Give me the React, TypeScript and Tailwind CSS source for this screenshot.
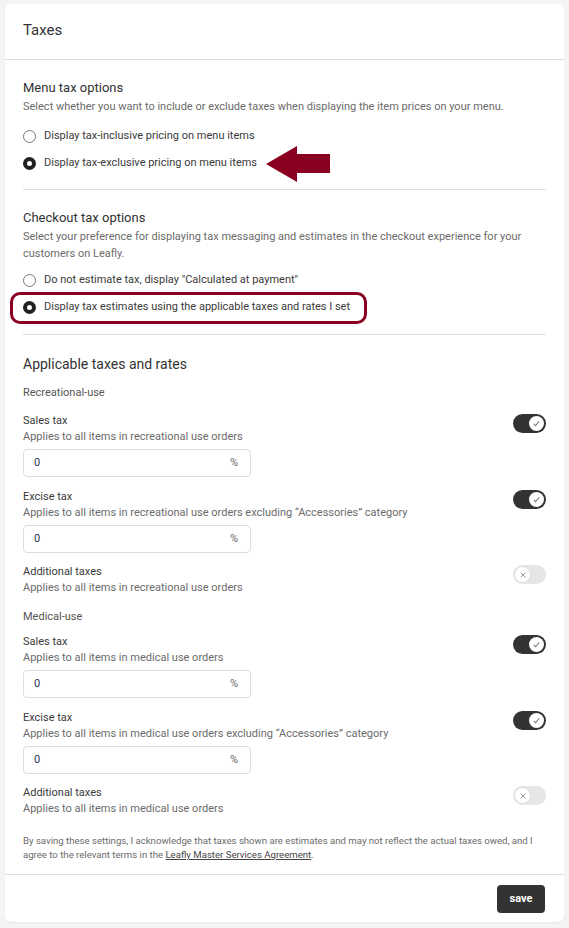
import React from 'react'

const font = { fontFamily: 'Roboto, "Liberation Sans", sans-serif' }

function Radio({ checked, label }: { checked?: boolean; label: string }) {
  return (
    <div className="flex h-[20px] items-center gap-[8px]">
      {checked ? (
        <span className="box-border h-[13px] w-[13px] rounded-full border-[4px] border-[#222] bg-white" />
      ) : (
        <span className="box-border h-[13px] w-[13px] rounded-full border border-[#777] bg-white" />
      )}
      <span className="text-[11px] text-[#3a3a3a]">{label}</span>
    </div>
  )
}

function Toggle({ on }: { on?: boolean }) {
  if (on) {
    return (
      <div className="flex h-[19px] w-[33px] items-center justify-end rounded-full bg-[#333] px-[2px]">
        <div className="flex h-[15px] w-[15px] items-center justify-center rounded-full bg-white">
          <svg width="9" height="9" viewBox="0 0 10 10" fill="none" stroke="#777" strokeWidth="1.2">
            <path d="M2 5.5 L4 7.5 L8 2.5" />
          </svg>
        </div>
      </div>
    )
  }
  return (
    <div className="flex h-[19px] w-[33px] items-center justify-start rounded-full bg-[#e6e6e6] px-[1px]">
      <div className="flex h-[17px] w-[17px] items-center justify-center rounded-full border border-[#ddd] bg-white">
        <svg width="8" height="8" viewBox="0 0 10 10" fill="none" stroke="#888" strokeWidth="1.1">
          <path d="M2 2 L8 8 M8 2 L2 8" />
        </svg>
      </div>
    </div>
  )
}

function TaxRow({
  title,
  desc,
  on,
  input,
}: {
  title: string
  desc: string
  on?: boolean
  input?: boolean
}) {
  return (
    <div className="flex items-start justify-between">
      <div>
        <div className="text-[11px] leading-[16px] text-[#3a3a3a]">{title}</div>
        <div className="text-[11px] leading-[16px] text-[#6b6b6b]">{desc}</div>
        {input && (
          <div className="mt-[4px] flex h-[28px] w-[228px] items-center justify-between rounded-[4px] border border-[#ddd] px-[10px] text-[11px]">
            <span className="text-[#2a3550]">0</span>
            <span className="pr-[2px] text-[#666]">%</span>
          </div>
        )}
      </div>
      <div className="pt-[1px]">
        <Toggle on={on} />
      </div>
    </div>
  )
}

export default function App() {
  return (
    <div className="min-h-screen bg-[#f4f4f4] px-[5px] pt-[4px] pb-[6px]" style={font}>
      <div className="rounded-[6px] bg-white shadow-[0_1px_2px_rgba(0,0,0,0.06)]">
        {/* header */}
        <div className="h-[56px] border-b border-[#dedede] px-[18px] pt-[17px] text-[15px] leading-[18px] text-[#333]">
          Taxes
        </div>

        <div className="px-[18px]">
          {/* menu tax options */}
          <div className="pt-[18px] pb-[16px] border-b border-[#dedede]">
            <div className="text-[13px] leading-[20px] text-[#333]">Menu tax options</div>
            <div className="mt-[1px] text-[11px] leading-[16px] text-[#6b6b6b]">
              Select whether you want to include or exclude taxes when displaying the item prices on your menu.
            </div>
            <div className="mt-[11px] flex flex-col gap-[7px]">
              <Radio label="Display tax-inclusive pricing on menu items" />
              <div className="relative">
                <Radio checked label="Display tax-exclusive pricing on menu items" />
                <svg
                  className="absolute left-[243px] top-[-7px]"
                  width="64"
                  height="36"
                  viewBox="0 0 64 36"
                >
                  <polygon points="0,18 31,0 31,8 64,8 64,27 31,27 31,36" fill="#8a0020" />
                </svg>
              </div>
            </div>
          </div>

          {/* checkout tax options */}
          <div className="pt-[18px] pb-[17px] border-b border-[#dedede]">
            <div className="text-[13px] leading-[20px] text-[#333]">Checkout tax options</div>
            <div className="text-[11px] leading-[17px] text-[#6b6b6b]">
              Select your preference for displaying tax messaging and estimates in the checkout experience for your
              customers on Leafly.
            </div>
            <div className="mt-[8px] flex flex-col gap-[7px]">
              <Radio label='Do not estimate tax, display "Calculated at payment"' />
              <div className="relative">
                <Radio checked label="Display tax estimates using the applicable taxes and rates I set" />
                <div className="absolute left-[-13px] top-[-5px] h-[32px] w-[357px] rounded-[10px] border-[3px] border-[#8a0020]" />
              </div>
            </div>
          </div>

          {/* applicable taxes */}
          <div className="pt-[19px]">
            <div className="text-[14px] leading-[20px] text-[#333]">Applicable taxes and rates</div>

            <div className="mt-[11px] text-[11px] leading-[16px] text-[#555]">Recreational-use</div>
            <div className="mt-[12px] flex flex-col gap-[12px]">
              <TaxRow on input title="Sales tax" desc="Applies to all items in recreational use orders" />
              <TaxRow
                on
                input
                title="Excise tax"
                desc="Applies to all items in recreational use orders excluding “Accessories” category"
              />
              <div className="-mt-[1px]">
                <TaxRow title="Additional taxes" desc="Applies to all items in recreational use orders" />
              </div>
            </div>

            <div className="mt-[13px] text-[11px] leading-[16px] text-[#555]">Medical-use</div>
            <div className="mt-[9px] flex flex-col gap-[12px]">
              <TaxRow on input title="Sales tax" desc="Applies to all items in medical use orders" />
              <TaxRow
                on
                input
                title="Excise tax"
                desc="Applies to all items in medical use orders excluding “Accessories” category"
              />
              <div className="-mt-[1px]">
                <TaxRow title="Additional taxes" desc="Applies to all items in medical use orders" />
              </div>
            </div>

            <div className="mt-[17px] pb-[12px] text-[9.6px] leading-[14px] text-[#6b6b6b]">
              <p>
                By saving these settings, I acknowledge that taxes shown are estimates and may not reflect the actual taxes owed, and I
              </p>
              <p>
                agree to the relevant terms in the <a className="text-[#444] underline">Leafly Master Services Agreement</a>.
              </p>
            </div>
          </div>
        </div>

        {/* footer */}
        <div className="flex justify-end border-t border-[#dedede] px-[19px] pt-[10px] pb-[9px]">
          <button className="h-[28px] w-[48px] rounded-[4px] bg-[#333] text-[11px] font-bold text-white">
            save
          </button>
        </div>
      </div>
    </div>
  )
}
